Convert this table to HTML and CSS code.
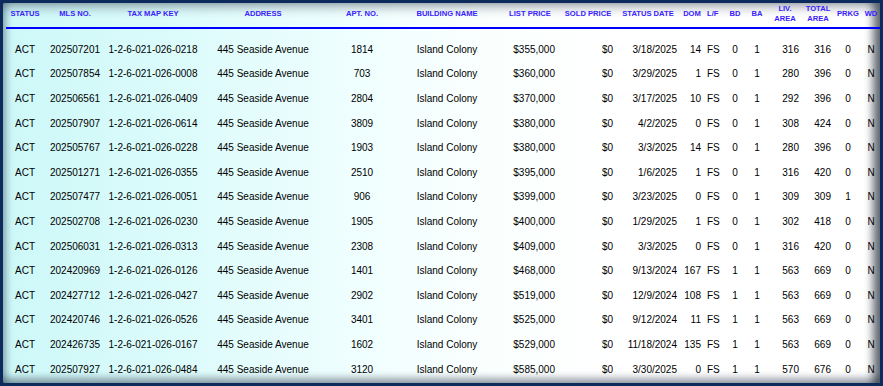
FILE: index.html
```html
<!DOCTYPE html>
<html>
<head>
<meta charset="utf-8">
<link rel="stylesheet" href="styles.css">
</head>
<body>
<div class="panel">
  <div class="row head">
    <div class="c">STATUS</div>
    <div class="c">MLS NO.</div>
    <div class="c">TAX MAP KEY</div>
    <div class="c">ADDRESS</div>
    <div class="c">APT. NO.</div>
    <div class="c">BUILDING NAME</div>
    <div class="c lp">LIST PRICE</div>
    <div class="c">SOLD PRICE</div>
    <div class="c">STATUS DATE</div>
    <div class="c">DOM</div>
    <div class="l">L/F</div>
    <div class="c">BD</div>
    <div class="c">BA</div>
    <div class="c">LIV.<br>AREA</div>
    <div class="c">TOTAL<br>AREA</div>
    <div class="c">PRKG</div>
    <div class="c">WD</div>
  </div>
  <div class="body">
    <div class="row"><div class="c">ACT</div><div class="c">202507201</div><div class="c">1-2-6-021-026-0218</div><div class="c">445 Seaside Avenue</div><div class="c">1814</div><div class="c">Island Colony</div><div class="r p5">$355,000</div><div class="r">$0</div><div class="r">3/18/2025</div><div class="r">14</div><div class="l">FS</div><div class="c">0</div><div class="c">1</div><div class="r">316</div><div class="r">316</div><div class="c">0</div><div class="c">N</div></div>
    <div class="row"><div class="c">ACT</div><div class="c">202507854</div><div class="c">1-2-6-021-026-0008</div><div class="c">445 Seaside Avenue</div><div class="c">703</div><div class="c">Island Colony</div><div class="r p5">$360,000</div><div class="r">$0</div><div class="r">3/29/2025</div><div class="r">1</div><div class="l">FS</div><div class="c">0</div><div class="c">1</div><div class="r">280</div><div class="r">396</div><div class="c">0</div><div class="c">N</div></div>
    <div class="row"><div class="c">ACT</div><div class="c">202506561</div><div class="c">1-2-6-021-026-0409</div><div class="c">445 Seaside Avenue</div><div class="c">2804</div><div class="c">Island Colony</div><div class="r p5">$370,000</div><div class="r">$0</div><div class="r">3/17/2025</div><div class="r">10</div><div class="l">FS</div><div class="c">0</div><div class="c">1</div><div class="r">292</div><div class="r">396</div><div class="c">0</div><div class="c">N</div></div>
    <div class="row"><div class="c">ACT</div><div class="c">202507907</div><div class="c">1-2-6-021-026-0614</div><div class="c">445 Seaside Avenue</div><div class="c">3809</div><div class="c">Island Colony</div><div class="r p5">$380,000</div><div class="r">$0</div><div class="r">4/2/2025</div><div class="r">0</div><div class="l">FS</div><div class="c">0</div><div class="c">1</div><div class="r">308</div><div class="r">424</div><div class="c">0</div><div class="c">N</div></div>
    <div class="row"><div class="c">ACT</div><div class="c">202505767</div><div class="c">1-2-6-021-026-0228</div><div class="c">445 Seaside Avenue</div><div class="c">1903</div><div class="c">Island Colony</div><div class="r p5">$380,000</div><div class="r">$0</div><div class="r">3/3/2025</div><div class="r">14</div><div class="l">FS</div><div class="c">0</div><div class="c">1</div><div class="r">280</div><div class="r">396</div><div class="c">0</div><div class="c">N</div></div>
    <div class="row"><div class="c">ACT</div><div class="c">202501271</div><div class="c">1-2-6-021-026-0355</div><div class="c">445 Seaside Avenue</div><div class="c">2510</div><div class="c">Island Colony</div><div class="r p5">$395,000</div><div class="r">$0</div><div class="r">1/6/2025</div><div class="r">1</div><div class="l">FS</div><div class="c">0</div><div class="c">1</div><div class="r">316</div><div class="r">420</div><div class="c">0</div><div class="c">N</div></div>
    <div class="row"><div class="c">ACT</div><div class="c">202507477</div><div class="c">1-2-6-021-026-0051</div><div class="c">445 Seaside Avenue</div><div class="c">906</div><div class="c">Island Colony</div><div class="r p5">$399,000</div><div class="r">$0</div><div class="r">3/23/2025</div><div class="r">0</div><div class="l">FS</div><div class="c">0</div><div class="c">1</div><div class="r">309</div><div class="r">309</div><div class="c">1</div><div class="c">N</div></div>
    <div class="row"><div class="c">ACT</div><div class="c">202502708</div><div class="c">1-2-6-021-026-0230</div><div class="c">445 Seaside Avenue</div><div class="c">1905</div><div class="c">Island Colony</div><div class="r p5">$400,000</div><div class="r">$0</div><div class="r">1/29/2025</div><div class="r">1</div><div class="l">FS</div><div class="c">0</div><div class="c">1</div><div class="r">302</div><div class="r">418</div><div class="c">0</div><div class="c">N</div></div>
    <div class="row"><div class="c">ACT</div><div class="c">202506031</div><div class="c">1-2-6-021-026-0313</div><div class="c">445 Seaside Avenue</div><div class="c">2308</div><div class="c">Island Colony</div><div class="r p5">$409,000</div><div class="r">$0</div><div class="r">3/3/2025</div><div class="r">0</div><div class="l">FS</div><div class="c">0</div><div class="c">1</div><div class="r">316</div><div class="r">420</div><div class="c">0</div><div class="c">N</div></div>
    <div class="row"><div class="c">ACT</div><div class="c">202420969</div><div class="c">1-2-6-021-026-0126</div><div class="c">445 Seaside Avenue</div><div class="c">1401</div><div class="c">Island Colony</div><div class="r p5">$468,000</div><div class="r">$0</div><div class="r">9/13/2024</div><div class="r">167</div><div class="l">FS</div><div class="c">1</div><div class="c">1</div><div class="r">563</div><div class="r">669</div><div class="c">0</div><div class="c">N</div></div>
    <div class="row"><div class="c">ACT</div><div class="c">202427712</div><div class="c">1-2-6-021-026-0427</div><div class="c">445 Seaside Avenue</div><div class="c">2902</div><div class="c">Island Colony</div><div class="r p5">$519,000</div><div class="r">$0</div><div class="r">12/9/2024</div><div class="r">108</div><div class="l">FS</div><div class="c">1</div><div class="c">1</div><div class="r">563</div><div class="r">669</div><div class="c">0</div><div class="c">N</div></div>
    <div class="row"><div class="c">ACT</div><div class="c">202420746</div><div class="c">1-2-6-021-026-0526</div><div class="c">445 Seaside Avenue</div><div class="c">3401</div><div class="c">Island Colony</div><div class="r p5">$525,000</div><div class="r">$0</div><div class="r">9/12/2024</div><div class="r">11</div><div class="l">FS</div><div class="c">1</div><div class="c">1</div><div class="r">563</div><div class="r">669</div><div class="c">0</div><div class="c">N</div></div>
    <div class="row"><div class="c">ACT</div><div class="c">202426735</div><div class="c">1-2-6-021-026-0167</div><div class="c">445 Seaside Avenue</div><div class="c">1602</div><div class="c">Island Colony</div><div class="r p5">$529,000</div><div class="r">$0</div><div class="r">11/18/2024</div><div class="r">135</div><div class="l">FS</div><div class="c">1</div><div class="c">1</div><div class="r">563</div><div class="r">669</div><div class="c">0</div><div class="c">N</div></div>
    <div class="row"><div class="c">ACT</div><div class="c">202507927</div><div class="c">1-2-6-021-026-0484</div><div class="c">445 Seaside Avenue</div><div class="c">3120</div><div class="c">Island Colony</div><div class="r p5">$585,000</div><div class="r">$0</div><div class="r">3/30/2025</div><div class="r">0</div><div class="l">FS</div><div class="c">1</div><div class="c">1</div><div class="r">570</div><div class="r">676</div><div class="c">0</div><div class="c">N</div></div>
  </div>
</div>
</body>
</html>
```
FILE: styles.css
```css
html, body {
  margin: 0;
  padding: 0;
}
body {
  background: #0c2a5c;
  width: 883px;
  height: 386px;
  padding: 3px;
  box-sizing: border-box;
  font-family: "Liberation Sans", Arial, sans-serif;
  overflow: hidden;
}
.panel {
  height: 380px;
  box-sizing: border-box;
  padding-left: 3px;
  border-radius: 2px;
  background: linear-gradient(90deg, #cdf8f8 0%, #dcfbfb 20%, #effefe 40%, #fafffe 55%, #ffffff 70%);
  box-shadow:
    inset 0 11px 8px -5px rgba(60, 70, 90, 0.32),
    inset -11px 0 9px -4px rgba(20, 30, 45, 0.65),
    inset 0 -9px 6px -3px rgba(40, 50, 70, 0.35),
    inset 7px 0 6px -3px rgba(40, 70, 90, 0.35);
  overflow: hidden;
}
.row {
  display: grid;
  grid-template-columns: 38px 62px 94px 126px 72px 98px 64px 56px 64px 24px 20px 22px 22px 34px 32px 28px 18px;
  align-items: center;
}
.head {
  height: 26px;
  box-sizing: border-box;
  padding-bottom: 2px;
  border-bottom: 2px solid #0000ff;
  font-size: 7.6px;
  font-weight: bold;
  line-height: 10px;
  color: #3a22ff;
  white-space: nowrap;
}
.head .lp {
  padding-left: 4px;
}
.body {
  padding-top: 8px;
  font-size: 10px;
  color: #000;
}
.body .row {
  height: 24.6px;
  white-space: nowrap;
}
.c {
  text-align: center;
}
.l {
  text-align: left;
  padding-left: 3px;
}
.r {
  text-align: right;
  padding-right: 3px;
}
.r.p5 {
  padding-right: 5px;
}
```
